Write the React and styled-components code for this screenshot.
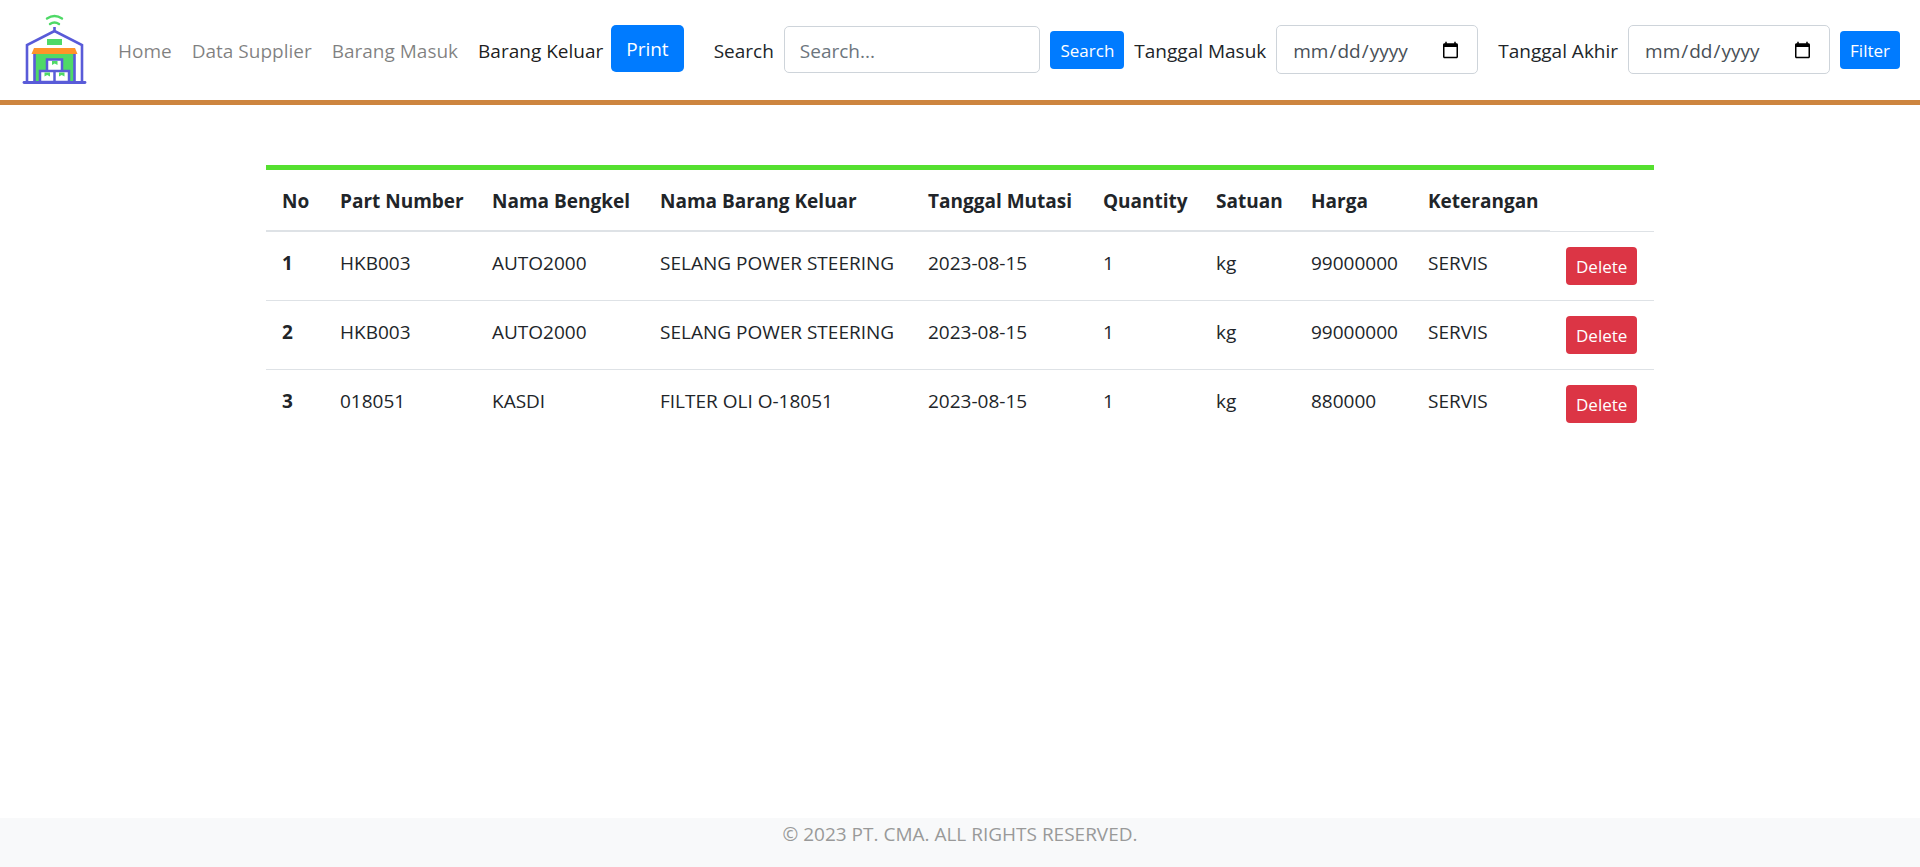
import React from "react";
import styled, { createGlobalStyle } from "styled-components";

const GlobalStyle = createGlobalStyle`
  *, *::before, *::after { box-sizing: border-box; }
  body {
    margin: 0;
    background: #fff;
    color: #212529;
    font-family: "Segoe UI", "Open Sans", "Noto Sans", sans-serif;
    font-size: 19px;
    line-height: 30px;
  }
  button, input { font: inherit; }
`;

const Page = styled.div`
  min-height: 100vh;
  display: flex;
  flex-direction: column;
`;

const Navbar = styled.header`
  display: flex;
  align-items: center;
  min-height: 105px;
  padding: 0 20px;
  border-bottom: 5px solid #cd853f;
`;

const Brand = styled.a`
  display: flex;
  margin-right: 20px;
`;

const Nav = styled.nav`
  display: flex;
  align-items: center;
`;

const NavLink = styled.a`
  padding: 11px 10px 9px;
  white-space: nowrap;
  text-decoration: none;
  color: ${(p) => (p.$active ? "rgba(0, 0, 0, 0.9)" : "rgba(0, 0, 0, 0.5)")};
  &:last-of-type { padding-right: 8px; }
`;

const Button = styled.button`
  padding: 8px 15px;
  border: 0;
  border-radius: 5px;
  color: #fff;
  background: ${(p) => (p.$danger ? "#dc3545" : "#007bff")};
  cursor: pointer;
`;

const PrintButton = styled(Button)`
  margin-bottom: 3px;
  height: 47px;
`;

const SmallButton = styled(Button)`
  display: block;
  padding: 7px 10px 5px;
  border-radius: 4px;
  font-size: 17px;
  line-height: 26px;
`;

const Filters = styled.form`
  display: flex;
  flex: 1;
  min-width: 0;
  align-items: center;
  gap: 10px;
  margin-left: 30px;
`;

const FieldLabel = styled.label`
  padding-top: 2px;
  white-space: nowrap;
  margin-left: ${(p) => (p.$spaced ? "10px" : "0")};
`;

const TextInput = styled.input`
  flex: 1;
  min-width: 0;
  height: 47px;
  margin: 0 0 1px;
  padding: 9px 15px 7px;
  border: 1px solid #ced4da;
  border-radius: 5px;
  color: #495057;
  background: #fff;
  &::placeholder { color: #6c757d; opacity: 1; }
`;

const DateInput = styled(TextInput)`
  flex: 0 0 202px;
  height: 49px;
`;

const Main = styled.main`
  flex: 1;
  width: 100%;
  max-width: 1428px;
  margin: 0 auto;
  padding: 60px 20px;
`;

const Table = styled.table`
  width: 100%;
  table-layout: fixed;
  border-collapse: collapse;
  border-top: 5px solid #55e02f;
`;

const Col = styled.col`
  width: ${(p) => p.$w}px;
`;

const HeadCell = styled.th`
  padding: 16px 0 14px 16px;
  text-align: left;
  white-space: nowrap;
  border-bottom: 2px solid #dee2e6;
`;

const Row = styled.tr`
  & + & { border-top: 1px solid #dee2e6; }
`;

const RowNumber = styled.th`
  padding: 16px 0 14px 16px;
  text-align: left;
  vertical-align: top;
`;

const Cell = styled.td`
  padding: 16px 0 14px 16px;
  vertical-align: top;
  white-space: nowrap;
  border-top: 1px solid #dee2e6;
`;

const ActionCell = styled(Cell)`
  padding: 15px 0 15px 16px;
`;

const Footer = styled.footer`
  padding: 1px 0 18px;
  text-align: center;
  color: #999;
  background: #f8f9fa;
`;

const Logo = () => (
  <svg width="68" height="76" viewBox="20 12 68 76" fill="none" role="img" aria-label="Warehouse">
    <path d="M47 18.500Q54.500 13.500 62 18.500M50 24Q54.500 21 59 24" stroke="#4fd967" strokeWidth="2.400" strokeLinecap="round" />
    <path d="M47 39h15v6H47z" fill="#4fd967" />
    <path d="M34 53h41v29H34z" fill="#4fd967" />
    <path d="M54.500 27v4M27 82V45L54.500 31 82 45v37M34.500 53v29M74.500 53v29" stroke="#595bd8" strokeWidth="2.600" />
    <path d="M34 48h41l2.500 6h-46z" fill="#ff9428" />
    <path d="M47 59.500h15V71H47zM40 71h14.500v11H40zM54.500 71H69v11H54.500z" fill="#fff" stroke="#595bd8" strokeWidth="2.500" />
    <path d="M52 61h5.500v4l-2.800-1.500L52 65zM44.500 72.500H50v4l-2.800-1.500-2.700 1.500zM59 72.500h5.500v4l-2.800-1.500L59 76.500z" fill="#4fd967" />
    <path d="M24 82.500h61" stroke="#595bd8" strokeWidth="2.800" strokeLinecap="round" />
  </svg>
);

const columns = [
  ["No", 58],
  ["Part Number", 152],
  ["Nama Bengkel", 168],
  ["Nama Barang Keluar", 268],
  ["Tanggal Mutasi", 175],
  ["Quantity", 113],
  ["Satuan", 95],
  ["Harga", 117],
  ["Keterangan", 138],
];

const rows = [
  ["HKB003", "AUTO2000", "SELANG POWER STEERING", "2023-08-15", "1", "kg", "99000000", "SERVIS"],
  ["HKB003", "AUTO2000", "SELANG POWER STEERING", "2023-08-15", "1", "kg", "99000000", "SERVIS"],
  ["018051", "KASDI", "FILTER OLI O-18051", "2023-08-15", "1", "kg", "880000", "SERVIS"],
];

export default function App() {
  return (
    <Page>
      <GlobalStyle />
      <Navbar>
        <Brand href="#"><Logo /></Brand>
        <Nav>
          <NavLink href="#">Home</NavLink>
          <NavLink href="#">Data Supplier</NavLink>
          <NavLink href="#">Barang Masuk</NavLink>
          <NavLink href="#" $active>Barang Keluar</NavLink>
          <PrintButton type="button">Print</PrintButton>
        </Nav>
        <Filters onSubmit={(e) => e.preventDefault()}>
          <FieldLabel htmlFor="search">Search</FieldLabel>
          <TextInput id="search" type="text" placeholder="Search..." />
          <SmallButton type="submit">Search</SmallButton>
          <FieldLabel htmlFor="from">Tanggal Masuk</FieldLabel>
          <DateInput id="from" type="date" />
          <FieldLabel htmlFor="to" $spaced>Tanggal Akhir</FieldLabel>
          <DateInput id="to" type="date" />
          <SmallButton type="submit">Filter</SmallButton>
        </Filters>
      </Navbar>
      <Main>
        <Table>
          <colgroup>
            {columns.map(([name, w]) => <Col key={name} $w={w} />)}
            <Col $w={104} />
          </colgroup>
          <thead>
            <tr>
              {columns.map(([name]) => <HeadCell key={name} scope="col">{name}</HeadCell>)}
            </tr>
          </thead>
          <tbody>
            {rows.map((row, i) => (
              <Row key={i}>
                <RowNumber scope="row">{i + 1}</RowNumber>
                {row.map((value, j) => <Cell key={j}>{value}</Cell>)}
                <ActionCell><SmallButton type="button" $danger>Delete</SmallButton></ActionCell>
              </Row>
            ))}
          </tbody>
        </Table>
      </Main>
      <Footer>© 2023 PT. CMA. ALL RIGHTS RESERVED.</Footer>
    </Page>
  );
}
